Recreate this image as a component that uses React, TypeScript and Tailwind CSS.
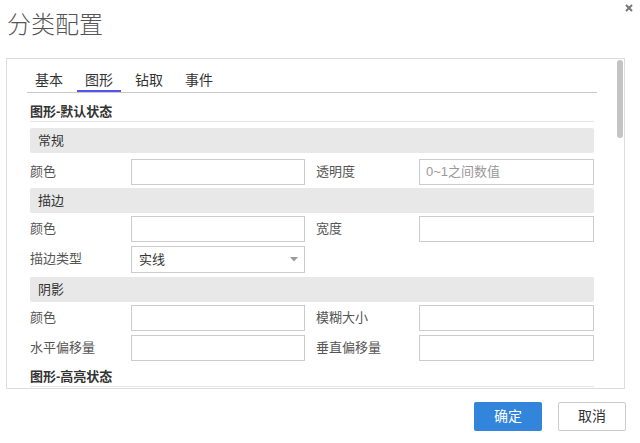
import React from "react";

const TABS = ["基本", "图形", "钻取", "事件"];

function GroupBar({ title }: { title: string }) {
  return (
    <div className="h-[25px] rounded-[2px] bg-[#e8e8e8] pl-[8px] text-[13px] leading-[25px] text-[#333]">
      {title}
    </div>
  );
}

function TextBox({ placeholder }: { placeholder?: string }) {
  return (
    <div className="h-[26px] border border-[#cccccc] bg-white pl-[6px] text-[13px] leading-[24px] text-[#999]">
      {placeholder}
    </div>
  );
}

function Label({ text, right }: { text: string; right?: boolean }) {
  return (
    <div className={`h-[26px] text-[13px] leading-[26px] text-[#555] ${right ? "pl-[11px]" : ""}`}>
      {text}
    </div>
  );
}

function FieldRow({
  left,
  right,
  placeholder,
  className = "",
  children,
}: {
  left: string;
  right?: string;
  placeholder?: string;
  className?: string;
  children?: React.ReactNode;
}) {
  return (
    <div className={`grid grid-cols-[101px_174px_114px_175px] ${className}`}>
      <Label text={left} />
      {children ?? <TextBox />}
      {right ? <Label text={right} right /> : <div />}
      {right ? <TextBox placeholder={placeholder} /> : <div />}
    </div>
  );
}

function SelectBox({ value }: { value: string }) {
  return (
    <div className="flex h-[27px] items-center justify-between border border-[#cccccc] bg-white pl-[7px] pr-[6px] text-[13px] text-[#333]">
      <span>{value}</span>
      <svg width="8" height="5" viewBox="0 0 8 5">
        <path d="M0 0 H8 L4 4.5 Z" fill="#9a9a9a" />
      </svg>
    </div>
  );
}

function SectionHeading({ title, className = "" }: { title: string; className?: string }) {
  return (
    <div className={`border-b border-[#e5e5e5] text-[13px] font-bold leading-[18px] text-[#333] ${className}`}>
      {title}
    </div>
  );
}

export default function App() {
  return (
    <div className="h-[443px] w-[640px] bg-white font-['Liberation_Sans','Noto_Sans_CJK_SC',sans-serif]">
      <div className="flex h-[58px] items-start justify-between pl-[7px] pr-[7px]">
        <h1 className="pt-[8px] text-[24px] font-light leading-[34px] text-[#555]">分类配置</h1>
        <button className="mt-[4px] p-0">
          <svg width="8" height="8" viewBox="0 0 8 8">
            <path d="M1 1 L7 7 M7 1 L1 7" stroke="#777" strokeWidth="2" />
          </svg>
        </button>
      </div>

      <div className="ml-[6px] flex h-[331px] w-[619px] border border-[#dcdcdc]">
        <div className="w-[603px] overflow-hidden pl-[20px]">
          <div className="mt-[12px] flex w-[570px] border-b border-[#c8c8c8]">
            {TABS.map((t, i) => (
              <div
                key={t}
                className={`mr-[6px] h-[21px] w-[44px] border-b-2 text-center text-[14px] leading-[19px] text-[#333] ${
                  i === 1 ? "border-[#5353f0]" : "border-transparent"
                }`}
              >
                {t}
              </div>
            ))}
          </div>

          <div className="ml-[3px] w-[564px]">
            <SectionHeading title="图形-默认状态" className="pt-[10px]" />

            <div className="mt-[6px]">
              <GroupBar title="常规" />
            </div>
            <FieldRow left="颜色" right="透明度" placeholder="0~1之间数值" className="mt-[6px]" />

            <div className="mt-[3px]">
              <GroupBar title="描边" />
            </div>
            <FieldRow left="颜色" right="宽度" className="mt-[3px]" />
            <FieldRow left="描边类型" className="mt-[4px]">
              <SelectBox value="实线" />
            </FieldRow>

            <div className="mt-[4px]">
              <GroupBar title="阴影" />
            </div>
            <FieldRow left="颜色" right="模糊大小" className="mt-[3px]" />
            <FieldRow left="水平偏移量" right="垂直偏移量" className="mt-[4px]" />

            <SectionHeading title="图形-高亮状态" className="pt-[7px]" />
          </div>
        </div>
        <div className="ml-[8px] w-[7px] pt-[1px]">
          <div className="h-[78px] w-[6px] rounded-full bg-[#c4c4c4]" />
        </div>
      </div>

      <div className="mt-[13px] flex justify-end gap-[16px] pr-[14px]">
        <button className="h-[29px] w-[68px] rounded-[2px] bg-[#3385db] text-[14px] text-white">确定</button>
        <button className="h-[29px] w-[68px] rounded-[2px] border border-[#cccccc] bg-white text-[14px] text-[#333]">
          取消
        </button>
      </div>
    </div>
  );
}
